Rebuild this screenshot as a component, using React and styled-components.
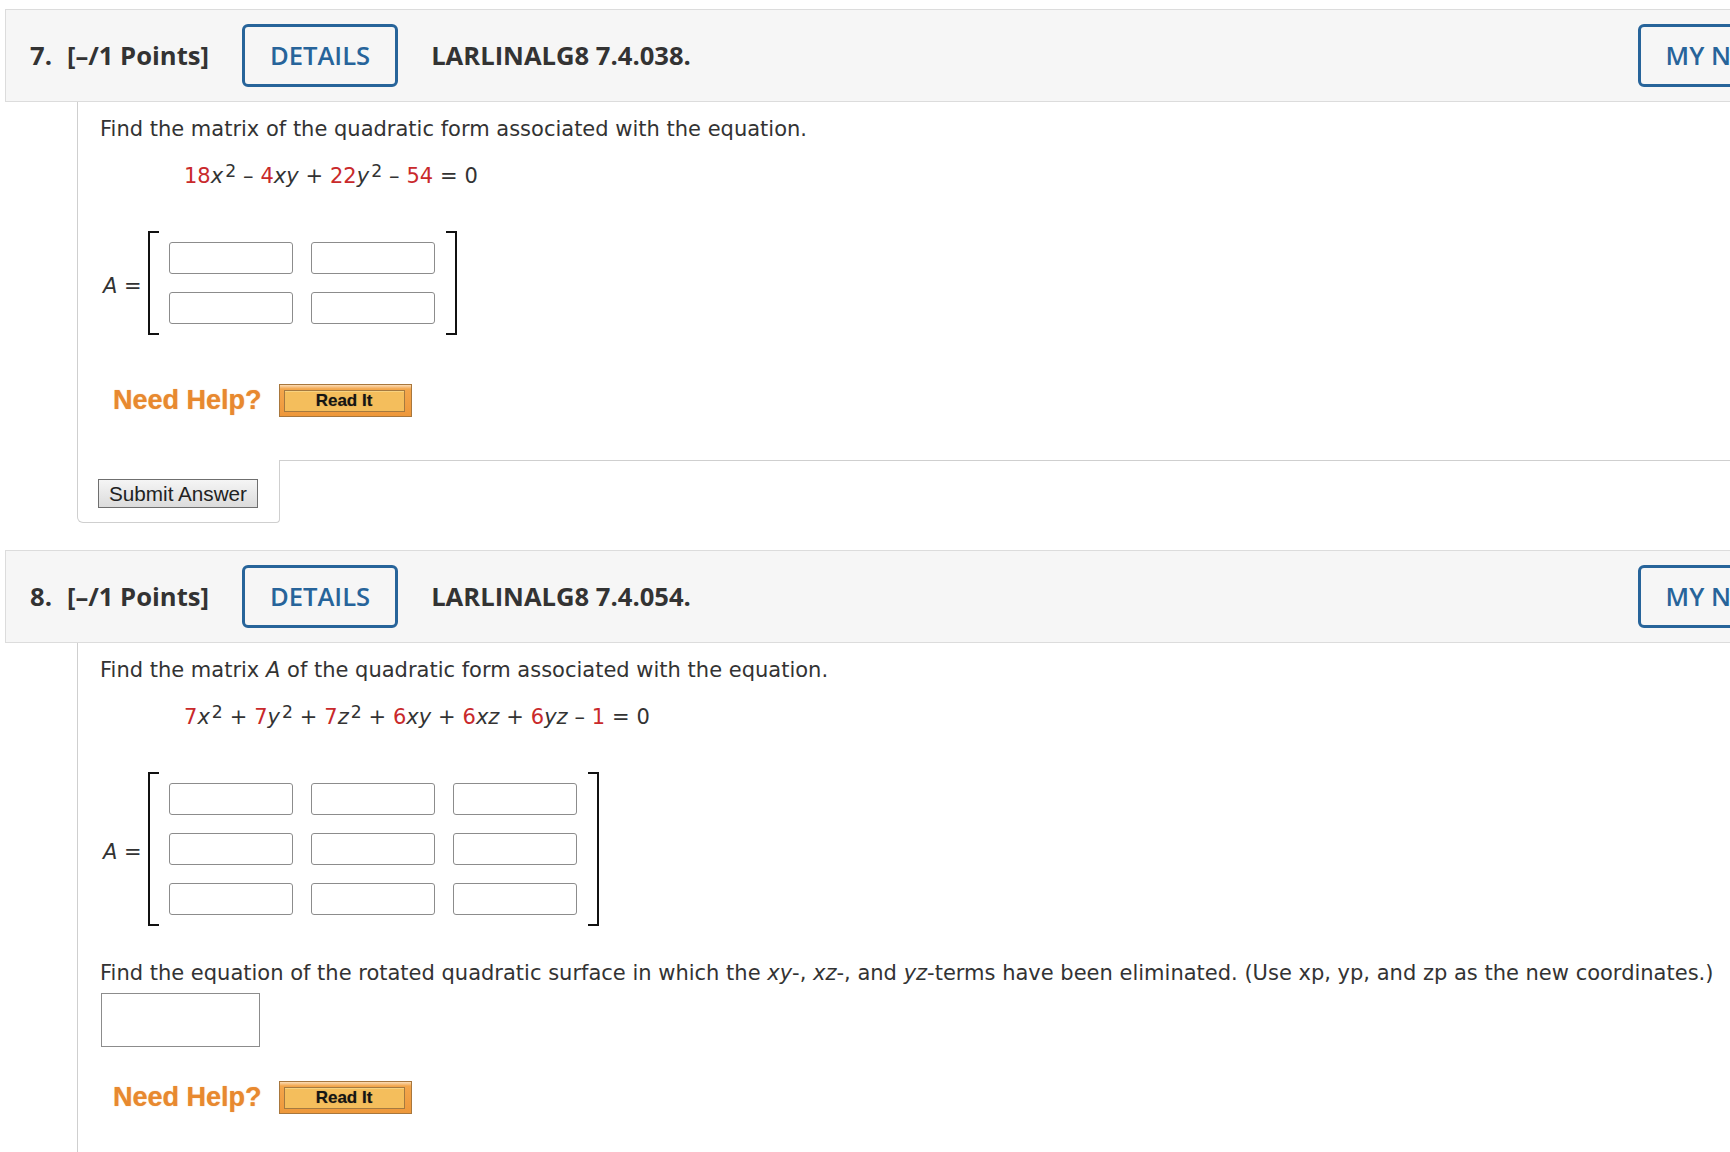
import React from 'react';
import styled, { createGlobalStyle } from 'styled-components';

const GlobalStyle = createGlobalStyle`
  html, body {
    margin: 0;
    padding: 0;
    background: #fff;
  }
  body {
    overflow: hidden;
    font-family: "DejaVu Sans", Verdana, sans-serif;
    color: #333;
  }
`;

const Page = styled.div`
  width: 1842px;
  padding: 9px 0 0 5px;
`;

const Question = styled.section`
  & + & {
    margin-top: 27px;
  }
`;

const Header = styled.header`
  display: flex;
  align-items: center;
  gap: 33px;
  padding: 14px 24px;
  background: #f6f6f6;
  border: 1px solid #dcdcdc;
  font-family: "Open Sans", "Liberation Sans", sans-serif;
  font-size: 25.6px;
  color: #333;
`;

const Points = styled.span`
  font-weight: 700;
  white-space: nowrap;
`;

const Num = styled.span`
  margin-right: 15px;
`;

const OutlineButton = styled.button`
  flex-shrink: 0;
  height: 63px;
  padding: 0 25px;
  border: 3px solid #27649a;
  border-radius: 6px;
  background: transparent;
  color: #27649a;
  font-family: "Open Sans", "Liberation Sans", sans-serif;
  font-size: 25.6px;
  font-weight: 600;
  cursor: pointer;
`;

const Code = styled.span`
  font-weight: 700;
  white-space: nowrap;
`;

const Actions = styled.div`
  margin-left: auto;
  display: flex;
  gap: 16px;
`;

const Content = styled.div`
  margin-left: 72px;
  border-left: 1px solid #cfcfcf;
  padding: 15px 0 ${p => (p.$last ? '60px' : '43px')} 22px;
  font-size: 21px;
  line-height: 24px;
`;

const Prompt = styled.p`
  margin: ${p => p.$gap || 0}px 0 0;
  white-space: nowrap;
`;

const Equation = styled.div`
  margin: 23px 0 0 84px;
  white-space: nowrap;
  word-spacing: 0.2px;
`;

const Coef = styled.span`
  color: #c9292b;
`;

const Var = styled.i`
  font-style: italic;
`;

const Sup = styled.span`
  position: relative;
  top: -0.36em;
  margin-left: 2px;
  font-size: 0.82em;
`;

const MatrixRow = styled.div`
  display: flex;
  align-items: center;
  margin-top: 42px;
`;

const MatrixLabel = styled.span`
  margin: 0 6px 0 3px;
  padding-top: 5px;
  white-space: nowrap;
`;

const Bracket = styled.span`
  align-self: stretch;
  width: 9px;
  border: 2px solid #111;
  ${p => (p.$side === 'left' ? 'border-right: none;' : 'border-left: none;')}
`;

const MatrixGrid = styled.div`
  display: grid;
  grid-template-columns: repeat(${p => p.$cols}, 124px);
  gap: 18px;
  padding: 11px 11px 11px 10px;
`;

const Cell = styled.input`
  box-sizing: border-box;
  width: 124px;
  height: 32px;
  margin: 0;
  border: 1px solid #8c8c8c;
  border-radius: 3px;
  background: #fff;
`;

const AnswerBox = styled.input`
  display: block;
  box-sizing: border-box;
  width: 159px;
  height: 54px;
  margin: 8px 0 0 1px;
  border: 1px solid #8c8c8c;
  border-radius: 0;
  background: #fff;
`;

const HelpRow = styled.div`
  display: flex;
  align-items: center;
  gap: 17px;
  margin-top: ${p => p.$gap}px;
  padding-left: 13px;
`;

const NeedHelp = styled.span`
  font-family: "Liberation Sans", Arial, sans-serif;
  font-size: 27px;
  font-weight: 700;
  line-height: 33px;
  color: #e8892f;
  text-shadow: 0 0 1px rgba(232, 137, 47, 0.7);
`;

const ReadIt = styled.button`
  display: flex;
  box-sizing: border-box;
  width: 133px;
  height: 33px;
  padding: 5px 6px 4px 4px;
  border: 1px solid #a8773d;
  background: linear-gradient(to bottom, #fbdcb6 0, #f3a64c 4px, #ee983b 100%);
  cursor: pointer;
`;

const ReadItFace = styled.span`
  flex: 1;
  display: flex;
  align-items: center;
  justify-content: center;
  border: 1px solid #a57a40;
  background: #f4be5c;
  box-shadow: inset 0 1px 0 #f8d27f;
  font-family: "Liberation Sans", Arial, sans-serif;
  font-size: 17px;
  font-weight: 700;
  color: #151515;
  text-shadow: 0 0 1px rgba(0, 0, 0, 0.35);
`;

const Footer = styled.div`
  display: flex;
  margin-left: 72px;
`;

const SubmitTab = styled.div`
  padding: 19px 21px 14px 20px;
  border: 1px solid #cfcfcf;
  border-top: none;
  border-radius: 0 0 4px 6px;
`;

const FooterRule = styled.div`
  flex: 1;
  border-top: 1px solid #cfcfcf;
`;

const SubmitButton = styled.button`
  height: 29px;
  padding: 0 10px;
  border: 1px solid #6f6f6f;
  background: linear-gradient(to bottom, #f5f5f5, #dcdcdc);
  font-family: "Liberation Sans", Arial, sans-serif;
  font-size: 20.7px;
  color: #222;
  cursor: pointer;
`;

const QuestionHeader = ({ number, code }) => (
  <Header>
    <Points>
      <Num>{number}.</Num>[–/1 Points]
    </Points>
    <OutlineButton type="button">DETAILS</OutlineButton>
    <Code>{code}</Code>
    <Actions>
      <OutlineButton type="button">MY NOTES</OutlineButton>
    </Actions>
  </Header>
);

const Matrix = ({ size }) => (
  <MatrixRow>
    <MatrixLabel>
      <Var>A</Var> =
    </MatrixLabel>
    <Bracket $side="left" />
    <MatrixGrid $cols={size}>
      {Array.from({ length: size * size }, (_, i) => (
        <Cell key={i} type="text" aria-label={`entry ${i + 1}`} />
      ))}
    </MatrixGrid>
    <Bracket $side="right" />
  </MatrixRow>
);

const Help = ({ gap }) => (
  <HelpRow $gap={gap}>
    <NeedHelp>Need Help?</NeedHelp>
    <ReadIt type="button">
      <ReadItFace>Read It</ReadItFace>
    </ReadIt>
  </HelpRow>
);

const App = () => (
  <>
    <GlobalStyle />
    <Page>
      <Question>
        <QuestionHeader number={7} code="LARLINALG8 7.4.038." />
        <Content>
          <Prompt>Find the matrix of the quadratic form associated with the equation.</Prompt>
          <Equation>
            <Coef>18</Coef>
            <Var>x</Var>
            <Sup>2</Sup> – <Coef>4</Coef>
            <Var>xy</Var> + <Coef>22</Coef>
            <Var>y</Var>
            <Sup>2</Sup> – <Coef>54</Coef> = 0
          </Equation>
          <Matrix size={2} />
          <Help gap={49} />
        </Content>
        <Footer>
          <SubmitTab>
            <SubmitButton type="button">Submit Answer</SubmitButton>
          </SubmitTab>
          <FooterRule />
        </Footer>
      </Question>

      <Question>
        <QuestionHeader number={8} code="LARLINALG8 7.4.054." />
        <Content $last>
          <Prompt>
            Find the matrix <Var>A</Var> of the quadratic form associated with the equation.
          </Prompt>
          <Equation>
            <Coef>7</Coef>
            <Var>x</Var>
            <Sup>2</Sup> + <Coef>7</Coef>
            <Var>y</Var>
            <Sup>2</Sup> + <Coef>7</Coef>
            <Var>z</Var>
            <Sup>2</Sup> + <Coef>6</Coef>
            <Var>xy</Var> + <Coef>6</Coef>
            <Var>xz</Var> + <Coef>6</Coef>
            <Var>yz</Var> – <Coef>1</Coef> = 0
          </Equation>
          <Matrix size={3} />
          <Prompt $gap={35}>
            Find the equation of the rotated quadratic surface in which the <Var>xy</Var>-,{' '}
            <Var>xz</Var>-, and <Var>yz</Var>-terms have been eliminated. (Use xp, yp, and zp as the new
            coordinates.)
          </Prompt>
          <AnswerBox type="text" aria-label="answer" />
          <Help gap={34} />
        </Content>
      </Question>
    </Page>
  </>
);

export default App;
